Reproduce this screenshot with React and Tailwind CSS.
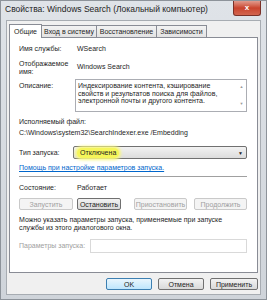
import React from "react";

const Btn = ({ children, disabled, active, className = "" }) => (
  <div
    className={
      "flex items-center justify-center rounded-[2px] border h-[12px] text-[7px] leading-none " +
      (disabled
        ? "border-[#c9c9c9] bg-[#f4f4f4] text-[#a0a0a0] "
        : active
        ? "border-[#3c7fb1] bg-gradient-to-b from-[#eaf6fd] to-[#bee6fd] text-[#1e1e1e] "
        : "border-[#707070] bg-gradient-to-b from-[#f2f2f2] to-[#d9d9d9] text-[#1e1e1e] ") +
      className
    }
  >
    {children}
  </div>
);

const App = () => {
  return (
    <div className="w-[267px] h-[300px] bg-gradient-to-b from-[#dfe3e8] to-[#cfd4da] flex flex-col font-['Liberation_Sans',sans-serif] text-[#1e1e1e] overflow-hidden border border-[#8d939a]">
      {/* Title bar */}
      <div className="h-[19px] flex items-start shrink-0">
        <div className="pl-[4px] pt-[3px] text-[8.5px] leading-[10px] text-[#1e1e1e] whitespace-nowrap flex-1">
          Свойства: Windows Search (Локальный компьютер)
        </div>
        <div className="w-[28px] h-[15px] mr-[5px] rounded-b-[3px] bg-gradient-to-b from-[#e09a8d] via-[#c9432d] to-[#d2654f] border border-t-0 border-[#7a3128] flex items-center justify-center text-white text-[8px] font-bold leading-none">
          x
        </div>
      </div>

      {/* Dialog body */}
      <div className="flex-1 mx-[5px] mb-[4px] bg-[#f0f0f0] border border-[#a7acb2] flex flex-col px-[2px] pt-[3px]">
        {/* Tabs */}
        <div className="flex items-end h-[13px] text-[7px] leading-none shrink-0">
          <div className="h-[14px] w-[33px] bg-white border border-b-0 border-[#898c95] flex items-center justify-center relative top-[1px] z-10">
            Общие
          </div>
          <div className="h-[12px] w-[55px] bg-gradient-to-b from-[#f2f2f2] to-[#e3e3e3] border border-l-0 border-b-0 border-[#898c95] flex items-center justify-center">
            Вход в систему
          </div>
          <div className="h-[12px] w-[60px] bg-gradient-to-b from-[#f2f2f2] to-[#e3e3e3] border border-l-0 border-b-0 border-[#898c95] flex items-center justify-center">
            Восстановление
          </div>
          <div className="h-[12px] w-[50px] bg-gradient-to-b from-[#f2f2f2] to-[#e3e3e3] border border-l-0 border-b-0 border-[#898c95] flex items-center justify-center">
            Зависимости
          </div>
        </div>

        {/* Panel */}
        <div className="h-[236px] bg-white border border-[#898c95] pl-[9px] pr-[10px] text-[7px] leading-[8px] flex flex-col">
          <div className="flex mt-[6px] h-[9px] items-center">
            <div className="w-[58px]">Имя службы:</div>
            <div>WSearch</div>
          </div>
          <div className="flex mt-[7px]">
            <div className="w-[58px] leading-[8px]">
              Отображаемое
              <br />
              имя:
            </div>
            <div className="pt-[3px]">Windows Search</div>
          </div>
          <div className="flex mt-[3px]">
            <div className="w-[56px] pt-[3px]">Описание:</div>
            <div className="flex-1 h-[33px] border border-[#abadb3] flex">
              <div className="flex-1 pl-[2px] pt-[2px] leading-[7.7px]">
                Индексирование контента, кэширование
                <br />
                свойств и результатов поиска для файлов,
                <br />
                электронной почты и другого контента.
              </div>
              <div className="w-[9px] flex flex-col justify-between items-center py-[3px] text-[#9a9a9a] text-[4px]">
                <span>▲</span>
                <span>▼</span>
              </div>
            </div>
          </div>
          <div className="mt-[6px]">Исполняемый файл:</div>
          <div className="mt-[3px] whitespace-nowrap">
            C:\Windows\system32\SearchIndexer.exe /Embedding
          </div>
          <div className="flex mt-[9px] items-center">
            <div className="w-[54px]">Тип запуска:</div>
            <div className="flex-1 h-[13px] border border-[#707070] rounded-[2px] bg-gradient-to-b from-[#f2f2f2] to-[#dcdcdc] flex items-center px-[3px]">
              <span className="bg-[#f5f55a] rounded-full px-[3px] py-[1px] shadow-[0_0_3px_2px_#f8f780]">
                Отключена
              </span>
              <span className="ml-auto text-[5px]">▼</span>
            </div>
          </div>
          <div className="mt-[5px] text-[#0066cc] underline whitespace-nowrap">
            Помощь при настройке параметров запуска.
          </div>
          <div className="mt-[4px] h-px bg-[#a0a0a0]" />
          <div className="flex mt-[7px]">
            <div className="w-[58px]">Состояние:</div>
            <div>Работает</div>
          </div>
          <div className="flex mt-[6px] gap-[0px]">
            <Btn disabled className="w-[54px]">Запустить</Btn>
            <Btn className="w-[44px] ml-[4px]">Остановить</Btn>
            <Btn disabled className="w-[53px] ml-[13px]">Приостановить</Btn>
            <Btn disabled className="w-[53px] ml-[7px]">Продолжить</Btn>
          </div>
          <div className="mt-[6px] leading-[8px]">
            Можно указать параметры запуска, применяемые при запуске
            <br />
            службы из этого диалогового окна.
          </div>
          <div className="flex mt-[7px] items-center">
            <div className="w-[71px] text-[#a0a0a0] whitespace-nowrap">Параметры запуска:</div>
            <div className="flex-1 h-[14px] border border-[#d9d9d9] bg-white" />
          </div>
        </div>

        {/* Bottom buttons */}
        <div className="flex justify-end mt-[5px] pr-0">
          <Btn active className="w-[46px]">OK</Btn>
          <Btn className="w-[46px] ml-[6px]">Отмена</Btn>
          <Btn className="w-[48px] ml-[6px]">Применить</Btn>
        </div>
      </div>
    </div>
  );
};

export default App;
